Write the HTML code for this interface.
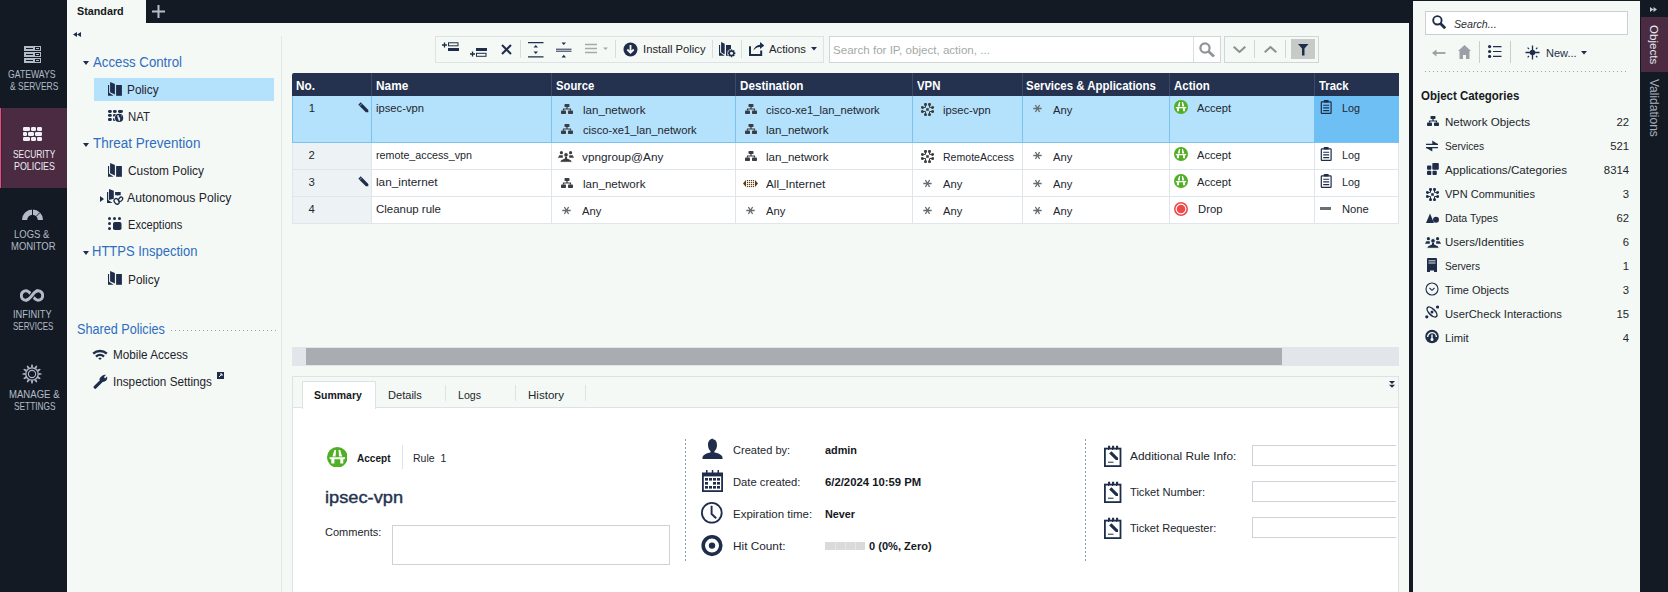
<!DOCTYPE html>
<html><head><meta charset="utf-8"><style>
html,body{margin:0;padding:0;}
body{width:1668px;height:592px;position:relative;overflow:hidden;background:#141a24;font-family:"Liberation Sans", sans-serif;}
body>div{position:absolute;line-height:1;white-space:pre;}
</style></head><body>
<div style="left:67px;top:23px;width:1342px;height:569px;background:#f4f9f5;"></div>
<div style="left:67px;top:0px;width:79px;height:23px;background:#f4f9f5;"></div>
<div style="left:1413px;top:1px;width:227px;height:591px;background:#f4f9f5;"></div>
<div style="left:1641px;top:17px;width:27px;height:55px;background:#4a2b42;"></div>
<div style="left:0px;top:108px;width:67px;height:80px;background:#4a2b42;"></div>
<div style="left:0px;top:108px;width:1px;height:80px;background:#ec4b80;"></div>
<div style="left:1px;top:108px;width:1px;height:80px;background:#3d2538;"></div>
<svg style="position:absolute;left:152px;top:5px" width="13" height="13" viewBox="0 0 13 13"><path d="M6.5 0V13M0 6.5H13" stroke="#b6bdc6" stroke-width="2"/></svg>
<svg style="position:absolute;left:24px;top:46px" width="17" height="17" viewBox="0 0 17 17"><g fill="#b2bcc8"><rect x="0" y="0" width="17" height="5"/><rect x="0" y="6" width="17" height="5"/><rect x="0" y="12" width="17" height="5"/></g><g fill="#141a24"><rect x="2" y="2" width="7" height="1"/><rect x="2" y="8" width="7" height="1"/><rect x="2" y="14" width="7" height="1"/><rect x="11" y="1" width="5" height="3"/><rect x="11" y="7" width="5" height="3"/><rect x="11" y="13" width="5" height="3"/></g><g fill="#b2bcc8"><rect x="12" y="2" width="3" height="1"/><rect x="12" y="8" width="3" height="1"/><rect x="12" y="14" width="3" height="1"/></g></svg>
<svg style="position:absolute;left:23px;top:127px" width="19" height="14" viewBox="0 0 19 14"><g fill="#eef2f7"><rect x="0" y="0" width="7" height="4" rx="1.2"/><rect x="8" y="0" width="5" height="4" rx="1.2"/><rect x="14" y="0" width="5" height="4" rx="1.2"/><rect x="0" y="5" width="4" height="4" rx="1.2"/><rect x="5" y="5" width="6" height="4" rx="1.2"/><rect x="12" y="5" width="7" height="4" rx="1.2"/><rect x="0" y="10" width="7" height="4" rx="1.2"/><rect x="8" y="10" width="5" height="4" rx="1.2"/><rect x="14" y="10" width="5" height="4" rx="1.2"/></g></svg>
<svg style="position:absolute;left:22px;top:209px" width="21" height="12" viewBox="0 0 21 12"><path d="M2.6 11A7.9 7.9 0 0 1 18.4 11" stroke="#b2bcc8" stroke-width="5.2" fill="none"/><path d="M10.5 0V6M14.2 7.3L18.3 3.2" stroke="#141a24" stroke-width="1"/></svg>
<svg style="position:absolute;left:20px;top:289px" width="24" height="13" viewBox="0 0 24 13"><path d="M12 6.5C14 4 15.5 1.8 18 1.8A4.7 4.7 0 0 1 18 11.2C15.5 11.2 14 9 12 6.5C10 4 8.5 1.8 6 1.8A4.7 4.7 0 0 0 6 11.2C8.5 11.2 10 9 12 6.5Z" stroke="#b2bcc8" stroke-width="3" fill="none"/><path d="M8.6 10.4C10 9.5 11 8 12 6.5C13 5 14 3.5 15.4 2.6" stroke="#141a24" stroke-width="5" fill="none"/><path d="M6 11.2C8.5 11.2 10 9 12 6.5C14 4 15.5 1.8 18 1.8" stroke="#b2bcc8" stroke-width="3" fill="none"/></svg>
<svg style="position:absolute;left:22px;top:364px" width="20" height="20" viewBox="0 0 20 20"><g transform="translate(10 10)"><g fill="#b2bcc8"><path d="M-1.1 -6.5L-0.6 -9.6H0.6L1.1 -6.5Z" transform="rotate(0)"/><path d="M-1.1 -6.5L-0.6 -9.6H0.6L1.1 -6.5Z" transform="rotate(30)"/><path d="M-1.1 -6.5L-0.6 -9.6H0.6L1.1 -6.5Z" transform="rotate(60)"/><path d="M-1.1 -6.5L-0.6 -9.6H0.6L1.1 -6.5Z" transform="rotate(90)"/><path d="M-1.1 -6.5L-0.6 -9.6H0.6L1.1 -6.5Z" transform="rotate(120)"/><path d="M-1.1 -6.5L-0.6 -9.6H0.6L1.1 -6.5Z" transform="rotate(150)"/><path d="M-1.1 -6.5L-0.6 -9.6H0.6L1.1 -6.5Z" transform="rotate(180)"/><path d="M-1.1 -6.5L-0.6 -9.6H0.6L1.1 -6.5Z" transform="rotate(210)"/><path d="M-1.1 -6.5L-0.6 -9.6H0.6L1.1 -6.5Z" transform="rotate(240)"/><path d="M-1.1 -6.5L-0.6 -9.6H0.6L1.1 -6.5Z" transform="rotate(270)"/><path d="M-1.1 -6.5L-0.6 -9.6H0.6L1.1 -6.5Z" transform="rotate(300)"/><path d="M-1.1 -6.5L-0.6 -9.6H0.6L1.1 -6.5Z" transform="rotate(330)"/></g><circle r="6.2" fill="none" stroke="#b2bcc8" stroke-width="1.3"/><circle r="3.6" fill="none" stroke="#b2bcc8" stroke-width="1.1"/></g></svg>
<div style="left:281px;top:36px;width:1px;height:556px;background:#e3e8eb;"></div>
<svg style="position:absolute;left:73px;top:32px" width="8" height="5" viewBox="0 0 8 5"><path d="M0 2.5L4 0V5ZM4 2.5L8 0V5Z" fill="#1f2d4b"/></svg>
<svg style="position:absolute;left:83px;top:61px" width="6" height="4" viewBox="0 0 6 4"><path d="M0 0H6L3 4Z" fill="#1f2d4b"/></svg>
<svg style="position:absolute;left:83px;top:142.5px" width="6" height="4" viewBox="0 0 6 4"><path d="M0 0H6L3 4Z" fill="#1f2d4b"/></svg>
<svg style="position:absolute;left:83px;top:251px" width="6" height="4" viewBox="0 0 6 4"><path d="M0 0H6L3 4Z" fill="#1f2d4b"/></svg>
<svg style="position:absolute;left:100px;top:196px" width="4" height="6" viewBox="0 0 4 6"><path d="M0 0V6L4 3Z" fill="#1f2d4b"/></svg>
<div style="left:94px;top:78px;width:180px;height:23px;background:#b4e1fb;"></div>
<div style="left:171px;top:330px;width:106px;height:1px;background:repeating-linear-gradient(to right,#97a3b4 0 1px,transparent 1px 4px)"></div>
<svg style="position:absolute;left:108px;top:82px" width="14" height="14" viewBox="0 0 14 14"><path d="M0 3H1.1V10.7L5.6 13.8H0Z" fill="#1f2d4b"/><path d="M2.1 0L6.9 2V12.6L2.1 10.2Z" fill="#1f2d4b"/><rect x="8.1" y="3" width="5.8" height="10.8" fill="#1f2d4b"/></svg>
<svg style="position:absolute;left:108px;top:163px" width="14" height="14" viewBox="0 0 14 14"><path d="M0 3H1.1V10.7L5.6 13.8H0Z" fill="#1f2d4b"/><path d="M2.1 0L6.9 2V12.6L2.1 10.2Z" fill="#1f2d4b"/><rect x="8.1" y="3" width="5.8" height="10.8" fill="#1f2d4b"/></svg>
<svg style="position:absolute;left:108px;top:271px" width="14" height="14" viewBox="0 0 14 14"><path d="M0 3H1.1V10.7L5.6 13.8H0Z" fill="#1f2d4b"/><path d="M2.1 0L6.9 2V12.6L2.1 10.2Z" fill="#1f2d4b"/><rect x="8.1" y="3" width="5.8" height="10.8" fill="#1f2d4b"/></svg>
<svg style="position:absolute;left:108px;top:110px" width="16" height="13" viewBox="0 0 16 13"><g fill="#1f2d4b"><rect x="0" y="0" width="3.8" height="2.9" rx="1.3"/><rect x="5" y="0" width="3.7" height="2.9" rx="1.3"/><rect x="10" y="0" width="4.9" height="2.9" rx="1.3"/><rect x="0" y="4" width="3.8" height="2.8" rx="1.3"/><rect x="5" y="4" width="3.7" height="2.8" rx="1.3"/><rect x="0" y="8.1" width="3.8" height="2.9" rx="1.3"/><rect x="5" y="8.1" width="3.7" height="2.9" rx="1.3"/></g><circle cx="11.1" cy="7.9" r="4.9" fill="#f4f9f5"/><circle cx="11.1" cy="7.9" r="4.1" fill="#1f2d4b"/><path d="M9.5 5C10.5 4.8 11 5.5 10.8 6.5C11.5 7.5 12.5 8 12.2 9.5C11.8 10.5 11.5 11 11 11.5C10.8 10 10 9.5 10 8.5C9.5 7.5 9 6 9.5 5Z M12.8 5.2L13.8 5.8L13.3 6.8Z" fill="#dfe6ee"/></svg>
<svg style="position:absolute;left:107px;top:189px" width="17" height="17" viewBox="0 0 17 17"><path d="M0 3.1H1.2V11L5.6 13.9H0Z" fill="#1f2d4b"/><path d="M2 0L6.8 1.8V9.8L2 10.9Z" fill="#1f2d4b"/><path d="M8.1 3.1H13.7V6.3H11.4L10.9 7L10.4 6.3H8.1Z" fill="#1f2d4b"/><ellipse cx="9.6" cy="12.4" rx="2.2" ry="3" transform="rotate(-35 9.6 12.4)" fill="none" stroke="#1f2d4b" stroke-width="1.3"/><ellipse cx="13.6" cy="10.3" rx="1.7" ry="2.5" transform="rotate(40 13.6 10.3)" fill="none" stroke="#1f2d4b" stroke-width="1.3"/></svg>
<svg style="position:absolute;left:108px;top:217px" width="14" height="13" viewBox="0 0 14 13"><g fill="#1f2d4b"><circle cx="1.5" cy="1.5" r="1.5"/><circle cx="6.5" cy="1.5" r="1.5"/><circle cx="11.5" cy="1.5" r="1.5"/><circle cx="1.5" cy="6.5" r="1.5"/><circle cx="1.5" cy="11.5" r="1.5"/><rect x="5" y="5" width="8.5" height="8" rx="1.8"/></g></svg>
<svg style="position:absolute;left:92px;top:349px" width="16" height="11" viewBox="0 0 16 11"><g fill="none" stroke="#1f2d4b" stroke-width="2.4"><path d="M1.2 4.6A10 10 0 0 1 14.8 4.6"/><path d="M4 7.6A6 6 0 0 1 12 7.6"/></g><path d="M6.2 9.3L8 8.4L9.8 9.3L8 11Z" fill="#1f2d4b"/></svg>
<svg style="position:absolute;left:93px;top:374px" width="15" height="15" viewBox="0 0 15 15"><path d="M2.2 13.2L8.3 7.1" stroke="#1f2d4b" stroke-width="3.2" stroke-linecap="round"/><path d="M9.5 1.5C11 0.5 12.5 0.6 13 0.8L11 3L12 4.5L14 2.5C14.5 4 14.2 5.5 13 6.8C11.5 8 9.5 8.2 8 7.5L6.5 6C6 4.5 8 2.5 9.5 1.5Z" fill="#1f2d4b"/></svg>
<svg style="position:absolute;left:217px;top:372px" width="7" height="7" viewBox="0 0 7 7"><rect x="0" y="0" width="7" height="7" fill="#1f2d4b"/><path d="M2 5L5 2M3 2H5V4" stroke="#f4f9f5" stroke-width="1" fill="none"/></svg>
<div style="left:435px;top:36px;width:389px;height:27px;box-sizing:border-box;border:1px solid #dce2e5;background:transparent;"></div>
<svg style="position:absolute;left:442px;top:42px" width="17" height="9" viewBox="0 0 17 9"><path d="M2.5 0.5V5.5M0 3H5" stroke="#1f2d4b" stroke-width="1.3"/><rect x="6.5" y="0.8" width="9.5" height="3" fill="none" stroke="#1f2d4b" stroke-width="1"/><rect x="6" y="6" width="11" height="3" fill="#1f2d4b"/></svg>
<svg style="position:absolute;left:470px;top:48px" width="17" height="9" viewBox="0 0 17 9"><rect x="6" y="0" width="11" height="3" fill="#1f2d4b"/><path d="M2.5 3.5V8.5M0 6H5" stroke="#1f2d4b" stroke-width="1.3"/><rect x="6.5" y="5.3" width="9.5" height="3" fill="none" stroke="#1f2d4b" stroke-width="1"/></svg>
<svg style="position:absolute;left:501px;top:44px" width="11" height="11" viewBox="0 0 11 11"><path d="M1 1L10 10M10 1L1 10" stroke="#1f2d4b" stroke-width="2"/></svg>
<div style="left:520px;top:40px;width:1px;height:18px;background:#d6dcdf;"></div>
<div style="left:615px;top:40px;width:1px;height:18px;background:#d6dcdf;"></div>
<svg style="position:absolute;left:528px;top:42px" width="16" height="16" viewBox="0 0 16 16"><path d="M0 0.7H15.5M0 14.8H15.5" stroke="#1f2d4b" stroke-width="1.2"/><path d="M5.5 5.5L7.8 3L10 5.5ZM5.5 9.5H10L7.8 12Z" fill="#1f2d4b"/></svg>
<svg style="position:absolute;left:556px;top:42px" width="16" height="16" viewBox="0 0 16 16"><path d="M0 7.2H15.5M0 9.2H15.5" stroke="#1f2d4b" stroke-width="1"/><path d="M5.5 0.5H10L7.8 3ZM5.5 15.5L7.8 12.8L10 15.5Z" fill="#1f2d4b"/></svg>
<svg style="position:absolute;left:585px;top:43px" width="24" height="12" viewBox="0 0 24 12"><path d="M0 1.5H12M0 5.5H12M0 9.5H12" stroke="#a4a9ab" stroke-width="1.6"/><path d="M18 4.5H23L20.5 7Z" fill="#a4a9ab"/></svg>
<svg style="position:absolute;left:623px;top:42px" width="15" height="15" viewBox="0 0 15 15"><circle cx="7.5" cy="7.5" r="7" fill="#1f2d4b"/><path d="M7.5 3V10.5M4.3 7.5L7.5 10.8L10.7 7.5" stroke="#f4f9f5" stroke-width="1.8" fill="none"/></svg>
<div style="left:712px;top:40px;width:1px;height:18px;background:#d6dcdf;"></div>
<div style="left:741px;top:40px;width:1px;height:18px;background:#d6dcdf;"></div>
<svg style="position:absolute;left:719px;top:42px" width="17" height="16" viewBox="0 0 17 16"><path d="M0 3H1.1V10.6L5.7 13.8H0Z" fill="#1f2d4b"/><path d="M2.1 0L5.7 1.7V12.6L2.1 10.3Z" fill="#1f2d4b"/><rect x="7" y="3" width="5" height="10.8" fill="#1f2d4b"/><g transform="translate(12.5 11.3)"><circle r="4.3" fill="#f4f9f5"/><g fill="#1f2d4b"><rect x="-0.8" y="-3.9" width="1.6" height="1.8" transform="rotate(0)"/><rect x="-0.8" y="-3.9" width="1.6" height="1.8" transform="rotate(45)"/><rect x="-0.8" y="-3.9" width="1.6" height="1.8" transform="rotate(90)"/><rect x="-0.8" y="-3.9" width="1.6" height="1.8" transform="rotate(135)"/><rect x="-0.8" y="-3.9" width="1.6" height="1.8" transform="rotate(180)"/><rect x="-0.8" y="-3.9" width="1.6" height="1.8" transform="rotate(225)"/><rect x="-0.8" y="-3.9" width="1.6" height="1.8" transform="rotate(270)"/><rect x="-0.8" y="-3.9" width="1.6" height="1.8" transform="rotate(315)"/></g><circle r="2.3" fill="none" stroke="#1f2d4b" stroke-width="1.5"/></g></svg>
<svg style="position:absolute;left:749px;top:42px" width="16" height="14" viewBox="0 0 16 14"><path d="M1 4.2V12.9H12.2V8.6" stroke="#1f2d4b" stroke-width="2" fill="none"/><path d="M4.3 8.6C5.2 5.2 7.8 3 11 2.8V0L15.3 3.6L11 7V5C8 5.2 6 6.5 4.3 8.6Z" fill="#1f2d4b"/></svg>
<svg style="position:absolute;left:811px;top:47px" width="6" height="4" viewBox="0 0 6 4"><path d="M0 0H6L3 3.5Z" fill="#1f2d4b"/></svg>
<div style="left:829px;top:36px;width:392px;height:27px;box-sizing:border-box;border:1px solid #cfd5d9;background:#ffffff;"></div>
<div style="left:1193px;top:37px;width:1px;height:25px;background:#d9dee1;"></div>
<svg style="position:absolute;left:1199px;top:42px" width="16" height="15" viewBox="0 0 16 15"><circle cx="6" cy="6" r="4.6" stroke="#8e9497" stroke-width="2.2" fill="none"/><path d="M9.3 9.3L15 14.5" stroke="#8e9497" stroke-width="2.8"/></svg>
<div style="left:1224px;top:36px;width:95px;height:27px;box-sizing:border-box;border:1px solid #cfd5d9;background:transparent;"></div>
<div style="left:1254px;top:40px;width:1px;height:18px;background:#cfd5d9;"></div>
<div style="left:1285px;top:40px;width:1px;height:18px;background:#cfd5d9;"></div>
<svg style="position:absolute;left:1233px;top:46px" width="13" height="7" viewBox="0 0 13 7"><path d="M0.7 0.7L6.5 6L12.3 0.7" stroke="#8b9291" stroke-width="2" fill="none"/></svg>
<svg style="position:absolute;left:1264px;top:46px" width="13" height="7" viewBox="0 0 13 7"><path d="M0.7 6.3L6.5 1L12.3 6.3" stroke="#8b9291" stroke-width="2" fill="none"/></svg>
<div style="left:1291px;top:39px;width:24px;height:20px;background:#c7cbc8;"></div>
<svg style="position:absolute;left:1298px;top:44px" width="11" height="12" viewBox="0 0 11 12"><path d="M0 0H10.5L6.5 4.5V11.5H4V4.5Z" fill="#1f2d4b"/></svg>
<div style="left:292px;top:73px;width:1107px;height:23px;background:#243250;border-top-left-radius:2px"></div>
<div style="left:371px;top:73px;width:1px;height:23px;background:#3b4967;"></div>
<div style="left:551px;top:73px;width:1px;height:23px;background:#3b4967;"></div>
<div style="left:735px;top:73px;width:1px;height:23px;background:#3b4967;"></div>
<div style="left:912px;top:73px;width:1px;height:23px;background:#3b4967;"></div>
<div style="left:1022px;top:73px;width:1px;height:23px;background:#3b4967;"></div>
<div style="left:1169px;top:73px;width:1px;height:23px;background:#3b4967;"></div>
<div style="left:1314px;top:73px;width:1px;height:23px;background:#3b4967;"></div>
<div style="left:292px;top:96px;width:1107px;height:47px;background:#b4e1fb;"></div>
<div style="left:1314px;top:96px;width:85px;height:46px;background:#6ec0f4;"></div>
<div style="left:292px;top:143px;width:79px;height:81px;background:#edf3f5;"></div>
<div style="left:371px;top:143px;width:1028px;height:81px;background:#ffffff;"></div>
<div style="left:292px;top:169px;width:1107px;height:1px;background:#dfe6eb;"></div>
<div style="left:292px;top:196px;width:1107px;height:1px;background:#dfe6eb;"></div>
<div style="left:292px;top:223px;width:1107px;height:1px;background:#dfe6eb;"></div>
<div style="left:292px;top:143px;width:1px;height:81px;background:#dfe6eb;"></div>
<div style="left:1398px;top:143px;width:1px;height:81px;background:#dfe6eb;"></div>
<div style="left:371px;top:143px;width:1px;height:81px;background:#dfe6eb;"></div>
<div style="left:551px;top:143px;width:1px;height:81px;background:#dfe6eb;"></div>
<div style="left:735px;top:143px;width:1px;height:81px;background:#dfe6eb;"></div>
<div style="left:912px;top:143px;width:1px;height:81px;background:#dfe6eb;"></div>
<div style="left:1022px;top:143px;width:1px;height:81px;background:#dfe6eb;"></div>
<div style="left:1169px;top:143px;width:1px;height:81px;background:#dfe6eb;"></div>
<div style="left:1314px;top:143px;width:1px;height:81px;background:#dfe6eb;"></div>
<div style="left:292px;top:142px;width:1107px;height:1px;background:#7bc3ee;"></div>
<div style="left:292px;top:96px;width:1px;height:47px;background:#7bc3ee;"></div>
<div style="left:371px;top:96px;width:1px;height:46px;background:#7bc3ee;"></div>
<div style="left:551px;top:96px;width:1px;height:46px;background:#7bc3ee;"></div>
<div style="left:735px;top:96px;width:1px;height:46px;background:#7bc3ee;"></div>
<div style="left:912px;top:96px;width:1px;height:46px;background:#7bc3ee;"></div>
<div style="left:1022px;top:96px;width:1px;height:46px;background:#7bc3ee;"></div>
<div style="left:1169px;top:96px;width:1px;height:46px;background:#7bc3ee;"></div>
<svg style="position:absolute;left:358px;top:102px" width="11" height="11" viewBox="0 0 11 11"><path d="M0.3 2.7L2.7 0.3L10.3 7.9V10.3H7.9Z" fill="#1f2d4b"/><path d="M1.6 3.9L3.9 1.6" stroke="#b4e1fb" stroke-width="0.7"/></svg>
<svg style="position:absolute;left:561px;top:104px" width="12" height="10" viewBox="0 0 12 10"><g fill="#3a3d42"><rect x="3.5" y="0" width="5" height="3" rx="0.8"/><rect x="0" y="6.5" width="5" height="3.5" rx="0.8"/><rect x="7" y="6.5" width="5" height="3.5" rx="0.8"/></g><path d="M6 3V5M2.5 6.5V5H9.5V6.5" stroke="#3a3d42" stroke-width="1.2" fill="none"/></svg>
<svg style="position:absolute;left:561px;top:124px" width="12" height="10" viewBox="0 0 12 10"><g fill="#3a3d42"><rect x="3.5" y="0" width="5" height="3" rx="0.8"/><rect x="0" y="6.5" width="5" height="3.5" rx="0.8"/><rect x="7" y="6.5" width="5" height="3.5" rx="0.8"/></g><path d="M6 3V5M2.5 6.5V5H9.5V6.5" stroke="#3a3d42" stroke-width="1.2" fill="none"/></svg>
<svg style="position:absolute;left:745px;top:104px" width="12" height="10" viewBox="0 0 12 10"><g fill="#3a3d42"><rect x="3.5" y="0" width="5" height="3" rx="0.8"/><rect x="0" y="6.5" width="5" height="3.5" rx="0.8"/><rect x="7" y="6.5" width="5" height="3.5" rx="0.8"/></g><path d="M6 3V5M2.5 6.5V5H9.5V6.5" stroke="#3a3d42" stroke-width="1.2" fill="none"/></svg>
<svg style="position:absolute;left:745px;top:124px" width="12" height="10" viewBox="0 0 12 10"><g fill="#3a3d42"><rect x="3.5" y="0" width="5" height="3" rx="0.8"/><rect x="0" y="6.5" width="5" height="3.5" rx="0.8"/><rect x="7" y="6.5" width="5" height="3.5" rx="0.8"/></g><path d="M6 3V5M2.5 6.5V5H9.5V6.5" stroke="#3a3d42" stroke-width="1.2" fill="none"/></svg>
<svg style="position:absolute;left:921px;top:103px" width="13" height="13" viewBox="0 0 13 13"><g fill="#3a3d3c"><circle cx="4.5" cy="1.4" r="1.5"/><circle cx="8.5" cy="1.4" r="1.5"/><circle cx="1.4" cy="4.4" r="1.5"/><circle cx="1.4" cy="8.5" r="1.5"/><circle cx="11.6" cy="4.4" r="1.5"/><circle cx="11.6" cy="8.5" r="1.5"/><circle cx="4.5" cy="11.6" r="1.5"/><circle cx="8.5" cy="11.6" r="1.5"/><rect x="5.2" y="5.2" width="2.6" height="2.6"/></g><path d="M4.5 1.4V4.4H1.4M8.5 1.4V4.4H11.6M1.4 8.5H4.5V11.6M11.6 8.5H8.5V11.6" stroke="#3a3d3c" stroke-width="1" fill="none"/></svg>
<svg style="position:absolute;left:1033px;top:104px" width="9" height="9" viewBox="0 0 9 9"><path d="M0.3 4.5H8.7M2.4 1L6.6 8M6.6 1L2.4 8" stroke="#686e70" stroke-width="1.35"/></svg>
<svg style="position:absolute;left:1174px;top:100px" width="14" height="14" viewBox="0 0 14 14"><circle cx="7" cy="7" r="7" fill="#4eb022"/><path d="M3.64 6.44 L5.04 2.10 L6.16 2.10 L5.81 6.44ZM7.84 2.10 L8.96 2.10 L10.36 6.44 L8.19 6.44ZM1.54 7.00 L12.46 7.00 L11.90 8.33 L11.06 8.33 L11.06 11.20 L9.03 11.20 L9.03 8.33 L5.04 8.33 L5.04 11.20 L2.94 11.20 L2.94 8.33 L2.10 8.33Z" fill="#fff"/></svg>
<svg style="position:absolute;left:1320px;top:100px" width="12" height="14" viewBox="0 0 12 14"><rect x="1.3" y="1.9" width="9.8" height="11.5" rx="0.6" fill="none" stroke="#1f2d4b" stroke-width="1.2"/><rect x="3.8" y="0" width="4.8" height="2.6" rx="0.5" fill="#1f2d4b"/><path d="M3.2 5.2H9.2M3.2 7.9H9.2M3.2 10.6H9.2" stroke="#1f2d4b" stroke-width="1.1"/></svg>
<svg style="position:absolute;left:558px;top:151px" width="16" height="12" viewBox="0 0 16 12"><g fill="#3a3d3c"><circle cx="3.4" cy="1.7" r="1.6"/><path d="M0 6.8L1.3 4.3H4.8V6.8Z"/><circle cx="12.6" cy="1.7" r="1.6"/><path d="M11.2 4.3H14.7L16 6.8H11.2Z"/></g><g fill="#3a3d3c" stroke="#fff" stroke-width="1"><ellipse cx="8" cy="3.9" rx="2.3" ry="2.4"/><path d="M1.6 11.3L3 8.8L6.5 7.2H9.5L13 8.8L14.4 11.3Z"/></g><rect x="7" y="6" width="2" height="2" fill="#3a3d3c"/></svg>
<svg style="position:absolute;left:745px;top:151px" width="12" height="10" viewBox="0 0 12 10"><g fill="#3a3d42"><rect x="3.5" y="0" width="5" height="3" rx="0.8"/><rect x="0" y="6.5" width="5" height="3.5" rx="0.8"/><rect x="7" y="6.5" width="5" height="3.5" rx="0.8"/></g><path d="M6 3V5M2.5 6.5V5H9.5V6.5" stroke="#3a3d42" stroke-width="1.2" fill="none"/></svg>
<svg style="position:absolute;left:921px;top:150px" width="13" height="13" viewBox="0 0 13 13"><g fill="#3a3d3c"><circle cx="4.5" cy="1.4" r="1.5"/><circle cx="8.5" cy="1.4" r="1.5"/><circle cx="1.4" cy="4.4" r="1.5"/><circle cx="1.4" cy="8.5" r="1.5"/><circle cx="11.6" cy="4.4" r="1.5"/><circle cx="11.6" cy="8.5" r="1.5"/><circle cx="4.5" cy="11.6" r="1.5"/><circle cx="8.5" cy="11.6" r="1.5"/><rect x="5.2" y="5.2" width="2.6" height="2.6"/></g><path d="M4.5 1.4V4.4H1.4M8.5 1.4V4.4H11.6M1.4 8.5H4.5V11.6M11.6 8.5H8.5V11.6" stroke="#3a3d3c" stroke-width="1" fill="none"/></svg>
<svg style="position:absolute;left:1033px;top:151px" width="9" height="9" viewBox="0 0 9 9"><path d="M0.3 4.5H8.7M2.4 1L6.6 8M6.6 1L2.4 8" stroke="#686e70" stroke-width="1.35"/></svg>
<svg style="position:absolute;left:1174px;top:147px" width="14" height="14" viewBox="0 0 14 14"><circle cx="7" cy="7" r="7" fill="#4eb022"/><path d="M3.64 6.44 L5.04 2.10 L6.16 2.10 L5.81 6.44ZM7.84 2.10 L8.96 2.10 L10.36 6.44 L8.19 6.44ZM1.54 7.00 L12.46 7.00 L11.90 8.33 L11.06 8.33 L11.06 11.20 L9.03 11.20 L9.03 8.33 L5.04 8.33 L5.04 11.20 L2.94 11.20 L2.94 8.33 L2.10 8.33Z" fill="#fff"/></svg>
<svg style="position:absolute;left:1320px;top:147px" width="12" height="14" viewBox="0 0 12 14"><rect x="1.3" y="1.9" width="9.8" height="11.5" rx="0.6" fill="none" stroke="#1f2d4b" stroke-width="1.2"/><rect x="3.8" y="0" width="4.8" height="2.6" rx="0.5" fill="#1f2d4b"/><path d="M3.2 5.2H9.2M3.2 7.9H9.2M3.2 10.6H9.2" stroke="#1f2d4b" stroke-width="1.1"/></svg>
<svg style="position:absolute;left:358px;top:176px" width="11" height="11" viewBox="0 0 11 11"><path d="M0.3 2.7L2.7 0.3L10.3 7.9V10.3H7.9Z" fill="#1f2d4b"/><path d="M1.6 3.9L3.9 1.6" stroke="#b4e1fb" stroke-width="0.7"/></svg>
<svg style="position:absolute;left:561px;top:178px" width="12" height="10" viewBox="0 0 12 10"><g fill="#3a3d42"><rect x="3.5" y="0" width="5" height="3" rx="0.8"/><rect x="0" y="6.5" width="5" height="3.5" rx="0.8"/><rect x="7" y="6.5" width="5" height="3.5" rx="0.8"/></g><path d="M6 3V5M2.5 6.5V5H9.5V6.5" stroke="#3a3d42" stroke-width="1.2" fill="none"/></svg>
<svg style="position:absolute;left:743px;top:180px" width="16" height="8" viewBox="0 0 16 8"><path d="M0 3.5L3 0V7Z M12 0L15 3.5L12 7Z" fill="#5e3a10"/><g fill="#5e3a10"><rect x="3.9" y="-0.1" width="1.2" height="1.2"/><rect x="3.9" y="1.9" width="1.2" height="1.2"/><rect x="3.9" y="3.9" width="1.2" height="1.2"/><rect x="3.9" y="5.9" width="1.2" height="1.2"/><rect x="5.9" y="-0.1" width="1.2" height="1.2"/><rect x="5.9" y="1.9" width="1.2" height="1.2"/><rect x="5.9" y="3.9" width="1.2" height="1.2"/><rect x="5.9" y="5.9" width="1.2" height="1.2"/><rect x="7.9" y="-0.1" width="1.2" height="1.2"/><rect x="7.9" y="1.9" width="1.2" height="1.2"/><rect x="7.9" y="3.9" width="1.2" height="1.2"/><rect x="7.9" y="5.9" width="1.2" height="1.2"/><rect x="9.9" y="-0.1" width="1.2" height="1.2"/><rect x="9.9" y="1.9" width="1.2" height="1.2"/><rect x="9.9" y="3.9" width="1.2" height="1.2"/><rect x="9.9" y="5.9" width="1.2" height="1.2"/></g></svg>
<svg style="position:absolute;left:923px;top:179px" width="9" height="9" viewBox="0 0 9 9"><path d="M0.3 4.5H8.7M2.4 1L6.6 8M6.6 1L2.4 8" stroke="#686e70" stroke-width="1.35"/></svg>
<svg style="position:absolute;left:1033px;top:179px" width="9" height="9" viewBox="0 0 9 9"><path d="M0.3 4.5H8.7M2.4 1L6.6 8M6.6 1L2.4 8" stroke="#686e70" stroke-width="1.35"/></svg>
<svg style="position:absolute;left:1174px;top:174px" width="14" height="14" viewBox="0 0 14 14"><circle cx="7" cy="7" r="7" fill="#4eb022"/><path d="M3.64 6.44 L5.04 2.10 L6.16 2.10 L5.81 6.44ZM7.84 2.10 L8.96 2.10 L10.36 6.44 L8.19 6.44ZM1.54 7.00 L12.46 7.00 L11.90 8.33 L11.06 8.33 L11.06 11.20 L9.03 11.20 L9.03 8.33 L5.04 8.33 L5.04 11.20 L2.94 11.20 L2.94 8.33 L2.10 8.33Z" fill="#fff"/></svg>
<svg style="position:absolute;left:1320px;top:174px" width="12" height="14" viewBox="0 0 12 14"><rect x="1.3" y="1.9" width="9.8" height="11.5" rx="0.6" fill="none" stroke="#1f2d4b" stroke-width="1.2"/><rect x="3.8" y="0" width="4.8" height="2.6" rx="0.5" fill="#1f2d4b"/><path d="M3.2 5.2H9.2M3.2 7.9H9.2M3.2 10.6H9.2" stroke="#1f2d4b" stroke-width="1.1"/></svg>
<svg style="position:absolute;left:562px;top:206px" width="9" height="9" viewBox="0 0 9 9"><path d="M0.3 4.5H8.7M2.4 1L6.6 8M6.6 1L2.4 8" stroke="#686e70" stroke-width="1.35"/></svg>
<svg style="position:absolute;left:746px;top:206px" width="9" height="9" viewBox="0 0 9 9"><path d="M0.3 4.5H8.7M2.4 1L6.6 8M6.6 1L2.4 8" stroke="#686e70" stroke-width="1.35"/></svg>
<svg style="position:absolute;left:923px;top:206px" width="9" height="9" viewBox="0 0 9 9"><path d="M0.3 4.5H8.7M2.4 1L6.6 8M6.6 1L2.4 8" stroke="#686e70" stroke-width="1.35"/></svg>
<svg style="position:absolute;left:1033px;top:206px" width="9" height="9" viewBox="0 0 9 9"><path d="M0.3 4.5H8.7M2.4 1L6.6 8M6.6 1L2.4 8" stroke="#686e70" stroke-width="1.35"/></svg>
<svg style="position:absolute;left:1174px;top:201.5px" width="14" height="14" viewBox="0 0 14 14"><circle cx="7" cy="7" r="6.2" fill="#fff" stroke="#ef4a4a" stroke-width="1.6"/><circle cx="7" cy="7" r="4.3" fill="#ef4a4a"/></svg>
<div style="left:1320px;top:207px;width:11px;height:3px;background:#6d7073;"></div>
<div style="left:292px;top:347px;width:1107px;height:19px;background:#e2e6ea;"></div>
<div style="left:306px;top:348px;width:976px;height:17px;background:#a9adb1;"></div>
<div style="left:292px;top:376px;width:1107px;height:230px;box-sizing:border-box;border:1px solid #dce2e5;background:#f4f9f5;"></div>
<div style="left:293px;top:408px;width:1105px;height:200px;background:#ffffff;"></div>
<div style="left:293px;top:407px;width:1105px;height:1px;background:#dce2e5;"></div>
<div style="left:302px;top:381px;width:74px;height:28px;box-sizing:border-box;border:1px solid #dce2e5;background:#ffffff;border-bottom:none"></div>
<div style="left:445px;top:385px;width:1px;height:16px;background:#dce2e5;"></div>
<div style="left:515px;top:385px;width:1px;height:16px;background:#dce2e5;"></div>
<div style="left:585px;top:385px;width:1px;height:16px;background:#dce2e5;"></div>
<svg style="position:absolute;left:1389px;top:381px" width="6" height="7" viewBox="0 0 6 7"><path d="M0 0H6L3 3ZM0 3.8H6L3 6.8Z" fill="#1f2d4b"/></svg>
<svg style="position:absolute;left:326.5px;top:446.5px" width="20.6" height="20.6" viewBox="0 0 20.6 20.6"><circle cx="10.3" cy="10.3" r="10.3" fill="#4eb022"/><path d="M5.36 9.48 L7.42 3.09 L9.06 3.09 L8.55 9.48ZM11.54 3.09 L13.18 3.09 L15.24 9.48 L12.05 9.48ZM2.27 10.30 L18.33 10.30 L17.51 12.26 L16.27 12.26 L16.27 16.48 L13.29 16.48 L13.29 12.26 L7.42 12.26 L7.42 16.48 L4.33 16.48 L4.33 12.26 L3.09 12.26Z" fill="#fff"/></svg>
<div style="left:402px;top:445px;width:1px;height:24px;background:#dde3e6;"></div>
<div style="left:392px;top:525px;width:278px;height:40px;box-sizing:border-box;border:1px solid #ccd3d8;background:#ffffff;"></div>
<div style="left:685px;top:439px;width:1px;height:122px;background:repeating-linear-gradient(to bottom,#8d9db0 0 2px,transparent 2px 4px)"></div>
<div style="left:1085px;top:439px;width:1px;height:122px;background:repeating-linear-gradient(to bottom,#8d9db0 0 2px,transparent 2px 4px)"></div>
<svg style="position:absolute;left:702px;top:438px" width="21" height="21" viewBox="0 0 21 21"><path d="M10.5 0.5C7 1.5 6 4 6 7C6 10 7.5 12.5 8.5 13V14.5C5 15 1.5 16.5 0.5 19V21H20.5V19C19.5 16.5 16 15 12.5 14.5V13C13.5 12.5 15 10 15 7C15 3.5 13.5 1.5 11.5 1.5Z" fill="#1f2d4b"/></svg>
<svg style="position:absolute;left:702px;top:470px" width="21" height="22" viewBox="0 0 21 22"><rect x="0.9" y="3.4" width="19.2" height="17.7" fill="none" stroke="#1f2d4b" stroke-width="1.8"/><rect x="0.9" y="3.4" width="19.2" height="3" fill="#1f2d4b"/><g fill="#1f2d4b"><rect x="4" y="0" width="1.5" height="4"/><rect x="9.8" y="0" width="1.5" height="4"/><rect x="15.5" y="0" width="1.5" height="4"/></g><g fill="#1f2d4b"><rect x="3" y="8" width="3" height="2.6"/><rect x="3" y="12" width="3" height="2.6"/><rect x="3" y="16" width="3" height="2.6"/><rect x="7" y="8" width="3" height="2.6"/><rect x="7" y="16" width="3" height="2.6"/><rect x="11" y="8" width="3" height="2.6"/><rect x="11" y="12" width="3" height="2.6"/><rect x="11" y="16" width="3" height="2.6"/><rect x="15" y="8" width="3" height="2.6"/><rect x="15" y="12" width="3" height="2.6"/><rect x="15" y="16" width="3" height="2.6"/></g></svg>
<svg style="position:absolute;left:701px;top:502px" width="22" height="22" viewBox="0 0 22 22"><circle cx="10.8" cy="10.8" r="9.9" fill="none" stroke="#1f2d4b" stroke-width="1.8"/><path d="M10.6 3.8V12L15.2 16.2" stroke="#1f2d4b" stroke-width="1.9" fill="none"/></svg>
<svg style="position:absolute;left:701px;top:535px" width="22" height="22" viewBox="0 0 22 22"><circle cx="11" cy="10.6" r="8.8" fill="none" stroke="#1f2d4b" stroke-width="3.6"/><circle cx="11" cy="10.6" r="3.2" fill="#1f2d4b"/></svg>
<div style="left:825px;top:542px;width:40px;height:8px;background:#dadada;"></div>
<div style="left:835px;top:542px;width:1px;height:8px;background:#e6e6e6;"></div>
<div style="left:845px;top:542px;width:1px;height:8px;background:#e6e6e6;"></div>
<div style="left:855px;top:542px;width:1px;height:8px;background:#e6e6e6;"></div>
<svg style="position:absolute;left:1104px;top:445px" width="18" height="22" viewBox="0 0 18 22"><rect x="0.9" y="3.6" width="15.6" height="17.5" fill="none" stroke="#1f2d4b" stroke-width="1.8"/><g stroke="#1f2d4b" stroke-width="1.1" fill="none"><path d="M4.6 5V1.2H5.6V3"/><path d="M8.6 5V1.2H9.6V3"/><path d="M12.6 5V1.2H13.6V3"/></g><path d="M5.2 8.4L7.4 6.2L14 12.8V15H11.8Z" fill="#1f2d4b"/><path d="M4 17.2H9.5" stroke="#1f2d4b" stroke-width="1"/></svg>
<div style="left:1252px;top:445px;width:144px;height:21px;box-sizing:border-box;border:1px solid #cdd3d8;background:#ffffff;border-right:none"></div>
<svg style="position:absolute;left:1104px;top:481px" width="18" height="22" viewBox="0 0 18 22"><rect x="0.9" y="3.6" width="15.6" height="17.5" fill="none" stroke="#1f2d4b" stroke-width="1.8"/><g stroke="#1f2d4b" stroke-width="1.1" fill="none"><path d="M4.6 5V1.2H5.6V3"/><path d="M8.6 5V1.2H9.6V3"/><path d="M12.6 5V1.2H13.6V3"/></g><path d="M5.2 8.4L7.4 6.2L14 12.8V15H11.8Z" fill="#1f2d4b"/><path d="M4 17.2H9.5" stroke="#1f2d4b" stroke-width="1"/></svg>
<div style="left:1252px;top:481px;width:144px;height:21px;box-sizing:border-box;border:1px solid #cdd3d8;background:#ffffff;border-right:none"></div>
<svg style="position:absolute;left:1104px;top:517px" width="18" height="22" viewBox="0 0 18 22"><rect x="0.9" y="3.6" width="15.6" height="17.5" fill="none" stroke="#1f2d4b" stroke-width="1.8"/><g stroke="#1f2d4b" stroke-width="1.1" fill="none"><path d="M4.6 5V1.2H5.6V3"/><path d="M8.6 5V1.2H9.6V3"/><path d="M12.6 5V1.2H13.6V3"/></g><path d="M5.2 8.4L7.4 6.2L14 12.8V15H11.8Z" fill="#1f2d4b"/><path d="M4 17.2H9.5" stroke="#1f2d4b" stroke-width="1"/></svg>
<div style="left:1252px;top:517px;width:144px;height:21px;box-sizing:border-box;border:1px solid #cdd3d8;background:#ffffff;border-right:none"></div>
<div style="left:1398px;top:376px;width:1px;height:216px;background:#dce2e5;"></div>
<div style="left:1399px;top:376px;width:10px;height:216px;background:#f4f9f5;"></div>
<div style="left:1425px;top:11px;width:203px;height:24px;box-sizing:border-box;border:1px solid #c9d0d5;background:#ffffff;"></div>
<svg style="position:absolute;left:1432px;top:15px" width="15" height="15" viewBox="0 0 15 15"><circle cx="5.4" cy="5.3" r="4.2" stroke="#1f2d4b" stroke-width="1.9" fill="none"/><path d="M8.4 8.4L13.2 13.3" stroke="#1f2d4b" stroke-width="2.8"/></svg>
<svg style="position:absolute;left:1432px;top:49px" width="14" height="8" viewBox="0 0 14 8"><path d="M1 4H13.5" stroke="#9aa0a5" stroke-width="1.8"/><path d="M0 4L4.5 0.5V7.5Z" fill="#9aa0a5"/></svg>
<svg style="position:absolute;left:1458px;top:45px" width="13" height="14" viewBox="0 0 13 14"><path d="M6.5 0L0 6H1.5V14H5V10H8V14H11.5V6H13Z" fill="#9aa0a5"/></svg>
<div style="left:1479px;top:41px;width:1px;height:22px;background:#c7cdd2;"></div>
<div style="left:1510px;top:41px;width:1px;height:22px;background:#c7cdd2;"></div>
<svg style="position:absolute;left:1488px;top:45px" width="14" height="13" viewBox="0 0 14 13"><g fill="#1f2d4b"><circle cx="1.6" cy="1.6" r="1.6"/><circle cx="1.6" cy="6.5" r="1.6"/><circle cx="1.6" cy="11.4" r="1.6"/></g><path d="M5 1.6H13.5M5 6.5H13.5M5 11.4H13.5" stroke="#1f2d4b" stroke-width="1.2"/></svg>
<svg style="position:absolute;left:1525px;top:45px" width="15" height="15" viewBox="0 0 15 15"><circle cx="7.5" cy="7.5" r="2.8" fill="#1f2d4b"/><path d="M7.5 0.5V14.5M0.5 7.5H14.5" stroke="#1f2d4b" stroke-width="1.3"/><path d="M2.6 2.6L4 4M12.4 2.6L11 4M2.6 12.4L4 11M12.4 12.4L11 11" stroke="#1f2d4b" stroke-width="1.1"/></svg>
<svg style="position:absolute;left:1581px;top:51px" width="6" height="4" viewBox="0 0 6 4"><path d="M0 0H6L3 3.5Z" fill="#1f2d4b"/></svg>
<div style="left:1425px;top:71px;width:202px;height:1px;background:repeating-linear-gradient(to right,#97a3b4 0 1px,transparent 1px 4px)"></div>
<svg style="position:absolute;left:1427px;top:116px" width="12" height="10" viewBox="0 0 12 10"><g fill="#1f2d4b"><rect x="3.5" y="0" width="5" height="3" rx="0.8"/><rect x="0" y="6.5" width="5" height="3.5" rx="0.8"/><rect x="7" y="6.5" width="5" height="3.5" rx="0.8"/></g><path d="M6 3V5M2.5 6.5V5H9.5V6.5" stroke="#1f2d4b" stroke-width="1.2" fill="none"/></svg>
<svg style="position:absolute;left:1426px;top:140px" width="12" height="12" viewBox="0 0 12 12"><path d="M0 4.3H12M0 7.7H12" stroke="#1f2d4b" stroke-width="1.2"/><path d="M6.3 0.6L12 4.3H6.3Z M0 7.7H6.3V11.4Z" fill="#1f2d4b"/></svg>
<svg style="position:absolute;left:1427px;top:163px" width="12" height="12" viewBox="0 0 12 12"><g fill="#1f2d4b"><rect x="0" y="2.5" width="4.3" height="4.3" rx="1"/><rect x="5.3" y="0" width="6.5" height="6.8" rx="1"/><rect x="0" y="7.8" width="4.3" height="4.2" rx="1"/><rect x="5.5" y="7.8" width="4.3" height="4.2" rx="1"/></g></svg>
<svg style="position:absolute;left:1426px;top:188px" width="13" height="13" viewBox="0 0 13 13"><g fill="#1f2d4b"><circle cx="4.5" cy="1.4" r="1.5"/><circle cx="8.5" cy="1.4" r="1.5"/><circle cx="1.4" cy="4.4" r="1.5"/><circle cx="1.4" cy="8.5" r="1.5"/><circle cx="11.6" cy="4.4" r="1.5"/><circle cx="11.6" cy="8.5" r="1.5"/><circle cx="4.5" cy="11.6" r="1.5"/><circle cx="8.5" cy="11.6" r="1.5"/><rect x="5.2" y="5.2" width="2.6" height="2.6"/></g><path d="M4.5 1.4V4.4H1.4M8.5 1.4V4.4H11.6M1.4 8.5H4.5V11.6M11.6 8.5H8.5V11.6" stroke="#1f2d4b" stroke-width="1" fill="none"/></svg>
<svg style="position:absolute;left:1426px;top:213px" width="13" height="10" viewBox="0 0 13 10"><path d="M0 10L4 0.5L8 10Z" fill="#1f2d4b"/><circle cx="10" cy="6.8" r="3" fill="#1f2d4b"/></svg>
<svg style="position:absolute;left:1425px;top:237px" width="16" height="12" viewBox="0 0 16 12"><g fill="#1f2d4b"><circle cx="3.4" cy="1.7" r="1.6"/><path d="M0 6.8L1.3 4.3H4.8V6.8Z"/><circle cx="12.6" cy="1.7" r="1.6"/><path d="M11.2 4.3H14.7L16 6.8H11.2Z"/></g><g fill="#1f2d4b" stroke="#f4f9f5" stroke-width="1"><ellipse cx="8" cy="3.9" rx="2.3" ry="2.4"/><path d="M1.6 11.3L3 8.8L6.5 7.2H9.5L13 8.8L14.4 11.3Z"/></g><rect x="7" y="6" width="2" height="2" fill="#1f2d4b"/></svg>
<svg style="position:absolute;left:1427px;top:258px" width="10" height="14" viewBox="0 0 10 14"><path d="M0 1A1 1 0 0 1 1 0H9A1 1 0 0 1 10 1V14H7V12.5H3V14H0Z" fill="#1f2d4b"/><path d="M1.5 2.8H8.5M1.5 5H8.5" stroke="#f4f9f5" stroke-width="0.9"/></svg>
<svg style="position:absolute;left:1425px;top:282px" width="14" height="14" viewBox="0 0 14 14"><circle cx="7" cy="7" r="6" fill="none" stroke="#1f2d4b" stroke-width="1.1"/><path d="M4.5 6L7 8.3L9.5 6" stroke="#1f2d4b" stroke-width="1.1" fill="none"/></svg>
<svg style="position:absolute;left:1425px;top:305px" width="14" height="14" viewBox="0 0 14 14"><ellipse cx="7" cy="7" rx="6.3" ry="3" transform="rotate(45 7 7)" fill="none" stroke="#1f2d4b" stroke-width="1.5"/><circle cx="7" cy="7" r="1.5" fill="#1f2d4b"/><circle cx="12.5" cy="2" r="1.6" fill="#1f2d4b"/><circle cx="1.8" cy="11.8" r="1.6" fill="#1f2d4b"/></svg>
<svg style="position:absolute;left:1425px;top:329px" width="14" height="15" viewBox="0 0 14 15"><circle cx="7" cy="7.5" r="6.8" fill="#1f2d4b"/><path d="M2.6 8A4.4 4.4 0 0 1 11.4 8" stroke="#f4f9f5" stroke-width="1.4" fill="none"/><path d="M7 5.5V10" stroke="#f4f9f5" stroke-width="1.4"/><circle cx="7" cy="10.5" r="1.5" fill="#f4f9f5"/></svg>
<svg style="position:absolute;left:1650px;top:7px" width="7" height="5" viewBox="0 0 7 5"><path d="M0 0L3.5 2.5L0 5ZM3.5 0L7 2.5L3.5 5Z" fill="#c7cdd4"/></svg>
<div style="left:1654px;top:25px;width:0;height:0;"><div style="position:absolute;left:0;top:0;transform-origin:0 0;transform:rotate(90deg) translate(0,-6px);font-size:11.6px;color:#e6e8ec;white-space:pre;line-height:1">Objects</div></div>
<div style="left:1654px;top:79px;width:0;height:0;"><div style="position:absolute;left:0;top:0;transform-origin:0 0;transform:rotate(90deg) translate(0,-6px);font-size:12px;color:#a7b0bb;white-space:pre;line-height:1">Validations</div></div>
<div style="left:76.50px;top:5.00px;font-size:11.6px;font-weight:700;font-style:normal;color:#141820;transform:scaleX(0.9289);transform-origin:0 0;">Standard</div>
<div style="left:8.10px;top:70.00px;font-size:10.2px;font-weight:400;font-style:normal;color:#b2bcc8;transform:scaleX(0.8513);transform-origin:0 0;">GATEWAYS</div>
<div style="left:10.00px;top:82.00px;font-size:10.2px;font-weight:400;font-style:normal;color:#b2bcc8;transform:scaleX(0.8316);transform-origin:0 0;">&amp; SERVERS</div>
<div style="left:12.65px;top:150.00px;font-size:10.2px;font-weight:400;font-style:normal;color:#eef0f3;transform:scaleX(0.8202);transform-origin:0 0;">SECURITY</div>
<div style="left:13.50px;top:162.00px;font-size:10.2px;font-weight:400;font-style:normal;color:#eef0f3;transform:scaleX(0.8714);transform-origin:0 0;">POLICIES</div>
<div style="left:13.60px;top:230.00px;font-size:10.2px;font-weight:400;font-style:normal;color:#b2bcc8;transform:scaleX(0.9320);transform-origin:0 0;">LOGS &amp;</div>
<div style="left:11.20px;top:242.00px;font-size:10.2px;font-weight:400;font-style:normal;color:#b2bcc8;transform:scaleX(0.9296);transform-origin:0 0;">MONITOR</div>
<div style="left:13.20px;top:310.00px;font-size:10.2px;font-weight:400;font-style:normal;color:#b2bcc8;transform:scaleX(0.9083);transform-origin:0 0;">INFINITY</div>
<div style="left:12.80px;top:322.00px;font-size:10.2px;font-weight:400;font-style:normal;color:#b2bcc8;transform:scaleX(0.7860);transform-origin:0 0;">SERVICES</div>
<div style="left:8.50px;top:390.00px;font-size:10.2px;font-weight:400;font-style:normal;color:#b2bcc8;transform:scaleX(0.9397);transform-origin:0 0;">MANAGE &amp;</div>
<div style="left:13.55px;top:402.00px;font-size:10.2px;font-weight:400;font-style:normal;color:#b2bcc8;transform:scaleX(0.8175);transform-origin:0 0;">SETTINGS</div>
<div style="left:92.60px;top:55.00px;font-size:14px;font-weight:400;font-style:normal;color:#2f6dc0;transform:scaleX(0.9453);transform-origin:0 0;">Access Control</div>
<div style="left:92.60px;top:136.00px;font-size:14px;font-weight:400;font-style:normal;color:#2f6dc0;transform:scaleX(0.9651);transform-origin:0 0;">Threat Prevention</div>
<div style="left:92.20px;top:244.00px;font-size:14px;font-weight:400;font-style:normal;color:#2f6dc0;transform:scaleX(0.9278);transform-origin:0 0;">HTTPS Inspection</div>
<div style="left:77.40px;top:322.00px;font-size:14px;font-weight:400;font-style:normal;color:#2f6dc0;transform:scaleX(0.9026);transform-origin:0 0;">Shared Policies</div>
<div style="left:127.30px;top:84.00px;font-size:12.6px;font-weight:400;font-style:normal;color:#1e232c;transform:scaleX(0.9402);transform-origin:0 0;">Policy</div>
<div style="left:127.70px;top:111.00px;font-size:12.6px;font-weight:400;font-style:normal;color:#1e232c;transform:scaleX(0.9025);transform-origin:0 0;">NAT</div>
<div style="left:127.70px;top:165.00px;font-size:12.6px;font-weight:400;font-style:normal;color:#1e232c;transform:scaleX(0.9438);transform-origin:0 0;">Custom Policy</div>
<div style="left:127.30px;top:192.00px;font-size:12.6px;font-weight:400;font-style:normal;color:#1e232c;transform:scaleX(0.9679);transform-origin:0 0;">Autonomous Policy</div>
<div style="left:127.70px;top:219.00px;font-size:12.6px;font-weight:400;font-style:normal;color:#1e232c;transform:scaleX(0.8810);transform-origin:0 0;">Exceptions</div>
<div style="left:127.60px;top:274.00px;font-size:12.6px;font-weight:400;font-style:normal;color:#1e232c;transform:scaleX(0.9402);transform-origin:0 0;">Policy</div>
<div style="left:112.50px;top:349.00px;font-size:12.6px;font-weight:400;font-style:normal;color:#1e232c;transform:scaleX(0.9313);transform-origin:0 0;">Mobile Access</div>
<div style="left:112.50px;top:376.00px;font-size:12.6px;font-weight:400;font-style:normal;color:#1e232c;transform:scaleX(0.9299);transform-origin:0 0;">Inspection Settings</div>
<div style="left:643.40px;top:44.00px;font-size:11.4px;font-weight:400;font-style:normal;color:#1e232c;transform:scaleX(0.9880);transform-origin:0 0;">Install Policy</div>
<div style="left:769.00px;top:44.00px;font-size:11.4px;font-weight:400;font-style:normal;color:#1e232c;transform:scaleX(0.9897);transform-origin:0 0;">Actions</div>
<div style="left:833.00px;top:45.00px;font-size:11.4px;font-weight:400;font-style:normal;color:#a2aaa7;transform:scaleX(1.0168);transform-origin:0 0;">Search for IP, object, action, ...</div>
<div style="left:295.60px;top:80.00px;font-size:12.4px;font-weight:700;font-style:normal;color:#ffffff;transform:scaleX(0.9512);transform-origin:0 0;">No.</div>
<div style="left:375.90px;top:80.00px;font-size:12.4px;font-weight:700;font-style:normal;color:#ffffff;transform:scaleX(0.9563);transform-origin:0 0;">Name</div>
<div style="left:555.70px;top:80.00px;font-size:12.4px;font-weight:700;font-style:normal;color:#ffffff;transform:scaleX(0.9111);transform-origin:0 0;">Source</div>
<div style="left:739.70px;top:80.00px;font-size:12.4px;font-weight:700;font-style:normal;color:#ffffff;transform:scaleX(0.9405);transform-origin:0 0;">Destination</div>
<div style="left:917.40px;top:80.00px;font-size:12.4px;font-weight:700;font-style:normal;color:#ffffff;transform:scaleX(0.9177);transform-origin:0 0;">VPN</div>
<div style="left:1026.30px;top:80.00px;font-size:12.4px;font-weight:700;font-style:normal;color:#ffffff;transform:scaleX(0.9232);transform-origin:0 0;">Services &amp; Applications</div>
<div style="left:1173.90px;top:80.00px;font-size:12.4px;font-weight:700;font-style:normal;color:#ffffff;transform:scaleX(0.9255);transform-origin:0 0;">Action</div>
<div style="left:1318.90px;top:80.00px;font-size:12.4px;font-weight:700;font-style:normal;color:#ffffff;transform:scaleX(0.9165);transform-origin:0 0;">Track</div>
<div style="left:308.80px;top:103.00px;font-size:11.3px;font-weight:400;font-style:normal;color:#22262d;">1</div>
<div style="left:376.00px;top:103.00px;font-size:11.4px;font-weight:400;font-style:normal;color:#22262d;transform:scaleX(0.9838);transform-origin:0 0;">ipsec-vpn</div>
<div style="left:582.50px;top:105.00px;font-size:11.4px;font-weight:400;font-style:normal;color:#22262d;transform:scaleX(1.0167);transform-origin:0 0;">lan_network</div>
<div style="left:582.50px;top:125.00px;font-size:11.4px;font-weight:400;font-style:normal;color:#22262d;transform:scaleX(0.9814);transform-origin:0 0;">cisco-xe1_lan_network</div>
<div style="left:766.00px;top:105.00px;font-size:11.4px;font-weight:400;font-style:normal;color:#22262d;transform:scaleX(0.9814);transform-origin:0 0;">cisco-xe1_lan_network</div>
<div style="left:766.00px;top:125.00px;font-size:11.4px;font-weight:400;font-style:normal;color:#22262d;transform:scaleX(1.0167);transform-origin:0 0;">lan_network</div>
<div style="left:943.40px;top:105.00px;font-size:11.4px;font-weight:400;font-style:normal;color:#22262d;transform:scaleX(0.9797);transform-origin:0 0;">ipsec-vpn</div>
<div style="left:1052.70px;top:105.00px;font-size:11.4px;font-weight:400;font-style:normal;color:#22262d;transform:scaleX(0.9824);transform-origin:0 0;">Any</div>
<div style="left:1196.80px;top:103.00px;font-size:11.4px;font-weight:400;font-style:normal;color:#22262d;transform:scaleX(0.9756);transform-origin:0 0;">Accept</div>
<div style="left:1342.40px;top:103.00px;font-size:11.4px;font-weight:400;font-style:normal;color:#22262d;transform:scaleX(0.9463);transform-origin:0 0;">Log</div>
<div style="left:308.60px;top:150.00px;font-size:11.3px;font-weight:400;font-style:normal;color:#22262d;">2</div>
<div style="left:376.00px;top:150.00px;font-size:11.4px;font-weight:400;font-style:normal;color:#22262d;transform:scaleX(0.9410);transform-origin:0 0;">remote_access_vpn</div>
<div style="left:582.00px;top:152.00px;font-size:11.4px;font-weight:400;font-style:normal;color:#22262d;transform:scaleX(1.0336);transform-origin:0 0;">vpngroup@Any</div>
<div style="left:766.00px;top:152.00px;font-size:11.4px;font-weight:400;font-style:normal;color:#22262d;transform:scaleX(1.0167);transform-origin:0 0;">lan_network</div>
<div style="left:943.40px;top:152.00px;font-size:11.4px;font-weight:400;font-style:normal;color:#22262d;transform:scaleX(0.9262);transform-origin:0 0;">RemoteAccess</div>
<div style="left:1052.70px;top:152.00px;font-size:11.4px;font-weight:400;font-style:normal;color:#22262d;transform:scaleX(0.9824);transform-origin:0 0;">Any</div>
<div style="left:1196.80px;top:150.00px;font-size:11.4px;font-weight:400;font-style:normal;color:#22262d;transform:scaleX(0.9756);transform-origin:0 0;">Accept</div>
<div style="left:1342.40px;top:150.00px;font-size:11.4px;font-weight:400;font-style:normal;color:#22262d;transform:scaleX(0.9463);transform-origin:0 0;">Log</div>
<div style="left:308.60px;top:177.00px;font-size:11.3px;font-weight:400;font-style:normal;color:#22262d;">3</div>
<div style="left:376.20px;top:177.00px;font-size:11.4px;font-weight:400;font-style:normal;color:#22262d;transform:scaleX(1.0356);transform-origin:0 0;">lan_internet</div>
<div style="left:582.50px;top:179.00px;font-size:11.4px;font-weight:400;font-style:normal;color:#22262d;transform:scaleX(1.0167);transform-origin:0 0;">lan_network</div>
<div style="left:766.00px;top:179.00px;font-size:11.4px;font-weight:400;font-style:normal;color:#22262d;transform:scaleX(1.0283);transform-origin:0 0;">All_Internet</div>
<div style="left:943.40px;top:179.00px;font-size:11.4px;font-weight:400;font-style:normal;color:#22262d;transform:scaleX(0.9824);transform-origin:0 0;">Any</div>
<div style="left:1052.70px;top:179.00px;font-size:11.4px;font-weight:400;font-style:normal;color:#22262d;transform:scaleX(0.9824);transform-origin:0 0;">Any</div>
<div style="left:1196.80px;top:177.00px;font-size:11.4px;font-weight:400;font-style:normal;color:#22262d;transform:scaleX(0.9756);transform-origin:0 0;">Accept</div>
<div style="left:1342.40px;top:177.00px;font-size:11.4px;font-weight:400;font-style:normal;color:#22262d;transform:scaleX(0.9463);transform-origin:0 0;">Log</div>
<div style="left:308.60px;top:204.00px;font-size:11.3px;font-weight:400;font-style:normal;color:#22262d;">4</div>
<div style="left:376.20px;top:204.00px;font-size:11.4px;font-weight:400;font-style:normal;color:#22262d;transform:scaleX(1.0055);transform-origin:0 0;">Cleanup rule</div>
<div style="left:582.00px;top:206.00px;font-size:11.4px;font-weight:400;font-style:normal;color:#22262d;transform:scaleX(0.9824);transform-origin:0 0;">Any</div>
<div style="left:766.00px;top:206.00px;font-size:11.4px;font-weight:400;font-style:normal;color:#22262d;transform:scaleX(0.9824);transform-origin:0 0;">Any</div>
<div style="left:943.40px;top:206.00px;font-size:11.4px;font-weight:400;font-style:normal;color:#22262d;transform:scaleX(0.9824);transform-origin:0 0;">Any</div>
<div style="left:1052.70px;top:206.00px;font-size:11.4px;font-weight:400;font-style:normal;color:#22262d;transform:scaleX(0.9824);transform-origin:0 0;">Any</div>
<div style="left:1197.50px;top:204.00px;font-size:11.4px;font-weight:400;font-style:normal;color:#22262d;transform:scaleX(0.9915);transform-origin:0 0;">Drop</div>
<div style="left:1342.40px;top:204.00px;font-size:11.4px;font-weight:400;font-style:normal;color:#22262d;transform:scaleX(0.9834);transform-origin:0 0;">None</div>
<div style="left:313.60px;top:390.00px;font-size:11.4px;font-weight:700;font-style:normal;color:#15181d;transform:scaleX(0.9219);transform-origin:0 0;">Summary</div>
<div style="left:388.40px;top:390.00px;font-size:11.4px;font-weight:400;font-style:normal;color:#22262d;transform:scaleX(0.9728);transform-origin:0 0;">Details</div>
<div style="left:458.40px;top:390.00px;font-size:11.4px;font-weight:400;font-style:normal;color:#22262d;transform:scaleX(0.9303);transform-origin:0 0;">Logs</div>
<div style="left:528.30px;top:390.00px;font-size:11.4px;font-weight:400;font-style:normal;color:#22262d;transform:scaleX(1.0149);transform-origin:0 0;">History</div>
<div style="left:357.30px;top:453.00px;font-size:11.4px;font-weight:700;font-style:normal;color:#15181d;transform:scaleX(0.8813);transform-origin:0 0;">Accept</div>
<div style="left:413.40px;top:453.00px;font-size:11.4px;font-weight:400;font-style:normal;color:#22262d;transform:scaleX(0.9219);transform-origin:0 0;">Rule  1</div>
<div style="left:325.40px;top:489.00px;font-size:17px;font-weight:400;font-style:normal;color:#253350;transform:scaleX(1.0734);transform-origin:0 0;-webkit-text-stroke:0.4px #253350;">ipsec-vpn</div>
<div style="left:325.40px;top:527.00px;font-size:11.4px;font-weight:400;font-style:normal;color:#22262d;transform:scaleX(0.9677);transform-origin:0 0;">Comments:</div>
<div style="left:733.30px;top:445.00px;font-size:11.4px;font-weight:400;font-style:normal;color:#22262d;transform:scaleX(0.9706);transform-origin:0 0;">Created by:</div>
<div style="left:824.80px;top:445.00px;font-size:11.4px;font-weight:700;font-style:normal;color:#15181d;transform:scaleX(0.9532);transform-origin:0 0;">admin</div>
<div style="left:733.30px;top:477.00px;font-size:11.4px;font-weight:400;font-style:normal;color:#22262d;transform:scaleX(0.9848);transform-origin:0 0;">Date created:</div>
<div style="left:825.00px;top:477.00px;font-size:11.4px;font-weight:700;font-style:normal;color:#15181d;transform:scaleX(0.9931);transform-origin:0 0;">6/2/2024 10:59 PM</div>
<div style="left:733.30px;top:509.00px;font-size:11.4px;font-weight:400;font-style:normal;color:#22262d;transform:scaleX(1.0081);transform-origin:0 0;">Expiration time:</div>
<div style="left:825.00px;top:509.00px;font-size:11.4px;font-weight:700;font-style:normal;color:#15181d;transform:scaleX(0.9498);transform-origin:0 0;">Never</div>
<div style="left:733.30px;top:541.00px;font-size:11.4px;font-weight:400;font-style:normal;color:#22262d;transform:scaleX(1.0357);transform-origin:0 0;">Hit Count:</div>
<div style="left:868.60px;top:541.00px;font-size:11.4px;font-weight:700;font-style:normal;color:#15181d;transform:scaleX(0.9704);transform-origin:0 0;">0 (0%, Zero)</div>
<div style="left:1130.20px;top:451.00px;font-size:11.4px;font-weight:400;font-style:normal;color:#22262d;transform:scaleX(1.0428);transform-origin:0 0;">Additional Rule Info:</div>
<div style="left:1130.20px;top:487.00px;font-size:11.4px;font-weight:400;font-style:normal;color:#22262d;transform:scaleX(0.9784);transform-origin:0 0;">Ticket Number:</div>
<div style="left:1130.20px;top:523.00px;font-size:11.4px;font-weight:400;font-style:normal;color:#22262d;transform:scaleX(0.9706);transform-origin:0 0;">Ticket Requester:</div>
<div style="left:1454.00px;top:19.00px;font-size:11.4px;font-weight:400;font-style:italic;color:#2a2d33;transform:scaleX(0.9359);transform-origin:0 0;">Search...</div>
<div style="left:1545.50px;top:48.00px;font-size:11.4px;font-weight:400;font-style:normal;color:#243047;transform:scaleX(0.9691);transform-origin:0 0;">New...</div>
<div style="left:1420.60px;top:90.00px;font-size:12.2px;font-weight:700;font-style:normal;color:#15181d;transform:scaleX(0.9424);transform-origin:0 0;">Object Categories</div>
<div style="left:1445.30px;top:117.00px;font-size:11.4px;font-weight:400;font-style:normal;color:#22262d;transform:scaleX(1.0165);transform-origin:0 0;">Network Objects</div>
<div style="left:1616.43px;top:117.00px;font-size:11.3px;font-weight:400;font-style:normal;color:#22262d;">22</div>
<div style="left:1445.30px;top:141.00px;font-size:11.4px;font-weight:400;font-style:normal;color:#22262d;transform:scaleX(0.8922);transform-origin:0 0;">Services</div>
<div style="left:1610.14px;top:141.00px;font-size:11.3px;font-weight:400;font-style:normal;color:#22262d;">521</div>
<div style="left:1445.30px;top:165.00px;font-size:11.4px;font-weight:400;font-style:normal;color:#22262d;transform:scaleX(1.0203);transform-origin:0 0;">Applications/Categories</div>
<div style="left:1603.86px;top:165.00px;font-size:11.3px;font-weight:400;font-style:normal;color:#22262d;">8314</div>
<div style="left:1445.30px;top:189.00px;font-size:11.4px;font-weight:400;font-style:normal;color:#22262d;transform:scaleX(0.9664);transform-origin:0 0;">VPN Communities</div>
<div style="left:1622.71px;top:189.00px;font-size:11.3px;font-weight:400;font-style:normal;color:#22262d;">3</div>
<div style="left:1445.30px;top:213.00px;font-size:11.4px;font-weight:400;font-style:normal;color:#22262d;transform:scaleX(0.9224);transform-origin:0 0;">Data Types</div>
<div style="left:1616.43px;top:213.00px;font-size:11.3px;font-weight:400;font-style:normal;color:#22262d;">62</div>
<div style="left:1445.30px;top:237.00px;font-size:11.4px;font-weight:400;font-style:normal;color:#22262d;transform:scaleX(1.0055);transform-origin:0 0;">Users/Identities</div>
<div style="left:1622.71px;top:237.00px;font-size:11.3px;font-weight:400;font-style:normal;color:#22262d;">6</div>
<div style="left:1445.30px;top:261.00px;font-size:11.4px;font-weight:400;font-style:normal;color:#22262d;transform:scaleX(0.8911);transform-origin:0 0;">Servers</div>
<div style="left:1622.71px;top:261.00px;font-size:11.3px;font-weight:400;font-style:normal;color:#22262d;">1</div>
<div style="left:1445.30px;top:285.00px;font-size:11.4px;font-weight:400;font-style:normal;color:#22262d;transform:scaleX(0.9592);transform-origin:0 0;">Time Objects</div>
<div style="left:1622.71px;top:285.00px;font-size:11.3px;font-weight:400;font-style:normal;color:#22262d;">3</div>
<div style="left:1445.30px;top:309.00px;font-size:11.4px;font-weight:400;font-style:normal;color:#22262d;transform:scaleX(0.9875);transform-origin:0 0;">UserCheck Interactions</div>
<div style="left:1616.43px;top:309.00px;font-size:11.3px;font-weight:400;font-style:normal;color:#22262d;">15</div>
<div style="left:1445.30px;top:333.00px;font-size:11.4px;font-weight:400;font-style:normal;color:#22262d;transform:scaleX(0.9805);transform-origin:0 0;">Limit</div>
<div style="left:1622.71px;top:333.00px;font-size:11.3px;font-weight:400;font-style:normal;color:#22262d;">4</div>
</body></html>
